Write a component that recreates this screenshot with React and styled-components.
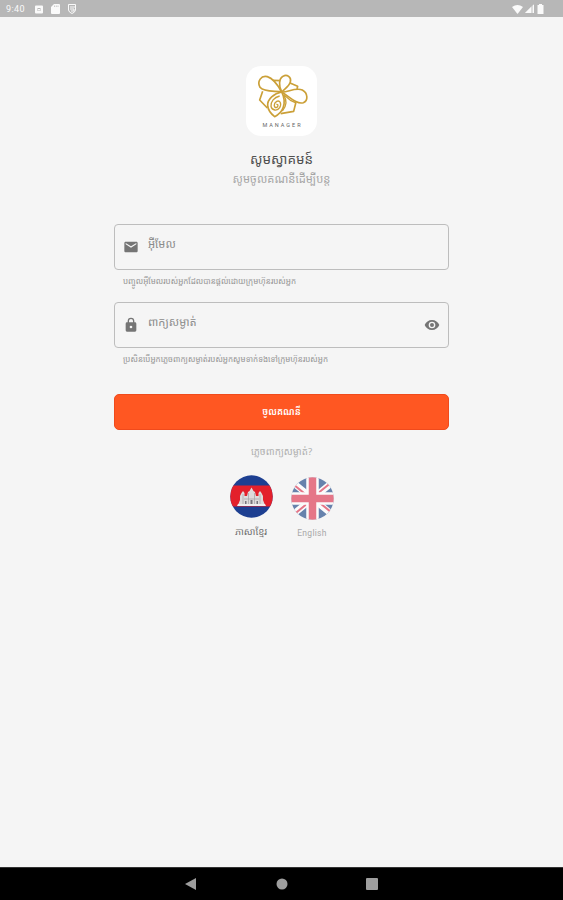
import React from 'react'
import styled, { createGlobalStyle } from 'styled-components'

const GlobalStyle = createGlobalStyle`
  * {
    box-sizing: border-box;
  }
  body {
    margin: 0;
    background-color: #f5f5f5;
    font-family: 'Noto Sans Khmer', 'Noto Sans', 'DejaVu Sans', sans-serif;
  }
`

const Screen = styled.div`
  display: flex;
  flex-direction: column;
  height: 100vh;
  overflow: hidden;
  background-color: #f5f5f5;
`

const StatusBar = styled.div`
  display: flex;
  align-items: center;
  justify-content: space-between;
  flex: none;
  height: 17px;
  padding: 1px 19px 0 6px;
  background-color: #b7b7b7;
  color: #fafafa;

  svg {
    display: block;
  }
`

const StatusGroup = styled.div`
  display: flex;
  align-items: center;
  gap: ${props => props.$gap};
`

const Clock = styled.span`
  width: 20px;
  margin-right: 1px;
  font-family: Roboto, sans-serif;
  font-size: 9px;
  letter-spacing: .4px;
`

const Main = styled.main`
  display: flex;
  flex: 1;
  flex-direction: column;
  align-items: center;
  padding-top: 49px;
`

const LogoCard = styled.div`
  display: flex;
  flex-direction: column;
  align-items: center;
  flex: none;
  width: 71px;
  height: 70px;
  padding-top: 2px;
  border-radius: 15px;
  background-color: white;
`

const LogoName = styled.div`
  margin-top: 3px;
  color: #666;
  font-family: Roboto, sans-serif;
  font-size: 5.5px;
  line-height: 7px;
  letter-spacing: 2px;
  text-indent: 2px;
`

const Title = styled.h1`
  height: 22px;
  margin: 12px 0 0;
  color: #505050;
  font-size: 13.5px;
  font-weight: 400;
  line-height: 22px;
  white-space: nowrap;
`

const Subtitle = styled.p`
  height: 18px;
  margin: 0;
  color: #a5a5a5;
  font-size: 11.2px;
  line-height: 18px;
  white-space: nowrap;
`

const Form = styled.div`
  width: 335px;
  margin-top: 36px;
`

const Field = styled.div`
  display: flex;
  align-items: center;
  height: 46px;
  padding: 0 8px 0 8px;
  border: 1px solid #bdbdbd;
  border-radius: 4px;
  color: #757575;
`

const Label = styled.span`
  flex: 1;
  height: 22px;
  margin: -6px 0 0 9px;
  color: #8b8b8b;
  font-size: 11.2px;
  line-height: 22px;
  white-space: nowrap;
`

const Helper = styled.div`
  height: 32px;
  padding: 2px 0 0 9px;
  color: #949494;
  font-size: 8.05px;
  line-height: 18px;
  white-space: nowrap;
`

const SubmitButton = styled.button`
  display: block;
  width: 100%;
  height: 36px;
  margin-top: 14px;
  padding: 0;
  border: 1px solid #f04a1c;
  border-radius: 5px;
  background-color: #ff5722;
  color: white;
  font-family: inherit;
  font-size: 9.2px;
  font-weight: 600;
  line-height: 32px;
`

const Forgot = styled.div`
  height: 20px;
  margin-top: 12px;
  color: #b0b0b0;
  font-size: 9.7px;
  line-height: 20px;
  text-align: center;
  white-space: nowrap;
`

const Languages = styled.div`
  display: flex;
  justify-content: center;
  gap: 17px;
  margin-top: 13px;
`

const Language = styled.div`
  display: flex;
  flex-direction: column;
  align-items: center;
  width: 44px;
  color: ${props => (props.$active ? '#707070' : '#a8a8a8')};
  font-family: ${props => (props.$latin ? 'Roboto, sans-serif' : 'inherit')};
  font-size: ${props => (props.$latin ? '8.5px' : '9.6px')};
  line-height: 20px;
  letter-spacing: ${props => (props.$latin ? '.3px' : '0')};
  white-space: nowrap;

  svg {
    display: block;
    flex: none;
    margin: ${props => (props.$latin ? '2px 0 3px' : '0 0 4px')};
    opacity: ${props => (props.$active ? 1 : .6)};
  }
`

const NavBar = styled.nav`
  display: flex;
  align-items: center;
  justify-content: center;
  gap: 78px;
  flex: none;
  height: 33px;
  border-top: 1px solid #333;
  background-color: black;
`

const BeeLogo = () => (
  <svg width="56" height="51" viewBox="0 0 168 153" fill="none" stroke="#cba038" strokeWidth="5" strokeLinejoin="round">
    <path d="M83 72C66 68 30 74 18 58C8 40 22 21 40 26C60 32 72 52 83 72Z" />
    <path d="M83 72C74 55 74 32 87 25C99 17 113 28 109 42C105 56 92 62 83 72Z" />
    <path d="M83 72C100 74 124 57 145 66C162 75 163 98 148 104C128 111 104 84 83 72Z" />
    <path d="M57 37L79 38M108 45L131 55L129 63M26 70L17 96L40 120M126 102L119 130L80 137" />
    <path d="M83 72C60 76 40 94 41 112C42 128 52 138 62 146C84 136 101 108 83 72Z" />
    <path d="M77 84C60 88 50 101 51 115C54 128 70 130 77 119C84 105 77 96 68 100C58 106 59 119 67 119C74 116 73 108 67 109" strokeWidth="4" />
    <path d="M88 80C101 99 96 116 85 129M91 82L111 98L124 104" strokeWidth="4" />
  </svg>
)

const CambodiaFlag = () => (
  <svg width="43" height="43" viewBox="0 0 43 43">
    <defs>
      <clipPath id="kh"><circle cx="21.5" cy="21.5" r="21.2" /></clipPath>
    </defs>
    <g clipPath="url(#kh)">
      <path fill="#1d3f91" d="M0 0H43V43H0Z" />
      <path fill="#e3202b" d="M0 10.5H43V31.500H0Z" />
      <path fill="#dedcdc" d="M8 30L10 25V21L11.500 18L13 16L14.500 18V21H17L18 17L19.500 16L21.500 12.500L23.500 16L25 17L26 21H28.500V18L30 16L31.500 18L33 21V25L35 30Z" />
      <path stroke="#aaa7ab" strokeWidth=".8" fill="none" d="M13 19V29M18.500 18V29M24.500 18V29M30 19V29M14 24H29" />
      <path fill="#77747c" d="M20.500 25H22.500V29H20.500ZM15 26H16.500V29H15ZM26.500 26H28V29H26.500Z" />
      <path fill="#f1eeee" d="M8 29H35L36 31H7Z" />
    </g>
  </svg>
)

const BritainFlag = () => (
  <svg width="43" height="43" viewBox="0 0 43 43">
    <defs>
      <clipPath id="gb"><circle cx="21.5" cy="21.5" r="21.2" /></clipPath>
    </defs>
    <g clipPath="url(#gb)">
      <path fill="#0a377d" d="M0 0H43V43H0Z" />
      <path stroke="white" strokeWidth="6.5" d="M0 4L43 39M43 4L0 39" />
      <path stroke="#dc2340" strokeWidth="2" d="M0 5.500L21 22.600M43 37.500L22 20.400M0 39.800L21 22.700M43 3.200L22 20.300" />
      <path stroke="white" strokeWidth="12.500" d="M21.500 0V43M0 21.500H43" />
      <path stroke="#dc2340" strokeWidth="7.500" d="M21.500 0V43M0 21.500H43" />
    </g>
  </svg>
)

const App = () => {
  return (
    <Screen>
      <GlobalStyle />
      <StatusBar>
        <StatusGroup $gap="8px">
          <Clock>9:40</Clock>
          <svg width="8" height="9" viewBox="0 0 8 9">
            <path fill="currentColor" fillRule="evenodd" d="M1 .5H7Q8 .5 8 1.500V7.500Q8 8.500 7 8.500H1Q0 8.500 0 7.500V1.500Q0 .5 1 .5ZM2.500 3V6H5.500V3ZM3 4H5V5.500H3Z" />
          </svg>
          <svg width="9" height="10" viewBox="0 0 9 10">
            <path fill="currentColor" d="M3 0H8Q9 0 9 1V9Q9 10 8 10H1Q0 10 0 9V3Z" />
            <path stroke="#b7b7b7" strokeWidth=".7" d="M3.500 1.500V3M5.300 1.500V3M7 1.500V3" />
          </svg>
          <svg width="8" height="10" viewBox="0 0 8 10" fill="none" stroke="currentColor">
            <path d="M.5 .5H7.500V6Q7 8.500 4 9.500Q1 8.500 .5 6ZM2 3H7M2 5H6V7H3" />
          </svg>
        </StatusGroup>
        <StatusGroup $gap="2px">
          <svg width="11" height="9" viewBox="0 0 11 9">
            <path fill="currentColor" d="M0 2Q5.500-2 11 2L5.500 9Z" />
          </svg>
          <svg width="10" height="10" viewBox="0 0 10 10">
            <path fill="currentColor" opacity=".55" d="M9 0V9H0Z" />
            <path fill="currentColor" d="M6 3V9H0Z" />
            <path stroke="currentColor" d="M8.500 1V9" />
          </svg>
          <svg width="7" height="10" viewBox="0 0 7 10">
            <path fill="currentColor" d="M2 0H5V1H6.500V10H.5V1H2Z" />
          </svg>
        </StatusGroup>
      </StatusBar>
      <Main>
        <LogoCard>
          <BeeLogo />
          <LogoName>MANAGER</LogoName>
        </LogoCard>
        <Title>សូមស្វាគមន៍</Title>
        <Subtitle>សូមចូលគណនីដើម្បីបន្ត</Subtitle>
        <Form>
          <Field>
            <svg width="16" height="16" viewBox="0 0 24 24">
              <path fill="currentColor" d="M20 4H4c-1.100 0-2 .9-2 2v12c0 1.100.9 2 2 2h16c1.100 0 2-.9 2-2V6c0-1.100-.9-2-2-2zm0 4l-8 5-8-5V6l8 5 8-5z" />
            </svg>
            <Label>អ៊ីមែល</Label>
          </Field>
          <Helper>បញ្ចូលអ៊ីមែលរបស់អ្នកដែលបានផ្តល់ដោយក្រុមហ៊ុនរបស់អ្នក</Helper>
          <Field>
            <svg width="16" height="16" viewBox="0 0 24 24">
              <path fill="currentColor" d="M18 8h-1V6A5 5 0 0 0 7 6v2H6a2 2 0 0 0-2 2v10a2 2 0 0 0 2 2h12a2 2 0 0 0 2-2V10a2 2 0 0 0-2-2zM9 6a3 3 0 0 1 6 0v2H9zm3 11a2 2 0 1 1 0-4 2 2 0 0 1 0 4z" />
            </svg>
            <Label>ពាក្យសម្ងាត់</Label>
            <svg width="16" height="16" viewBox="0 0 24 24">
              <path fill="currentColor" d="M12 4.500C7 4.500 2.730 7.610 1 12c1.730 4.390 6 7.500 11 7.500s9.270-3.110 11-7.500C21.270 7.610 17 4.500 12 4.500zM12 17a5 5 0 1 1 0-10 5 5 0 0 1 0 10zm0-8a3 3 0 1 0 0 6 3 3 0 0 0 0-6z" />
            </svg>
          </Field>
          <Helper>ប្រសិនបើអ្នកភ្លេចពាក្យសម្ងាត់របស់អ្នកសូមទាក់ទងទៅក្រុមហ៊ុនរបស់អ្នក</Helper>
          <SubmitButton>ចូលគណនី</SubmitButton>
          <Forgot>ភ្លេចពាក្យសម្ងាត់?</Forgot>
          <Languages>
            <Language $active>
              <CambodiaFlag />
              ភាសាខ្មែរ
            </Language>
            <Language $latin>
              <BritainFlag />
              English
            </Language>
          </Languages>
        </Form>
      </Main>
      <NavBar>
        <svg width="13" height="12" viewBox="0 0 13 12"><path fill="#9e9e9e" d="M0 6L11 0V12Z" /></svg>
        <svg width="12" height="12" viewBox="0 0 12 12"><circle cx="6" cy="6" r="5.500" fill="#9e9e9e" /></svg>
        <svg width="12" height="12" viewBox="0 0 12 12"><rect width="12" height="12" rx="1" fill="#9e9e9e" /></svg>
      </NavBar>
    </Screen>
  )
}

export default App
